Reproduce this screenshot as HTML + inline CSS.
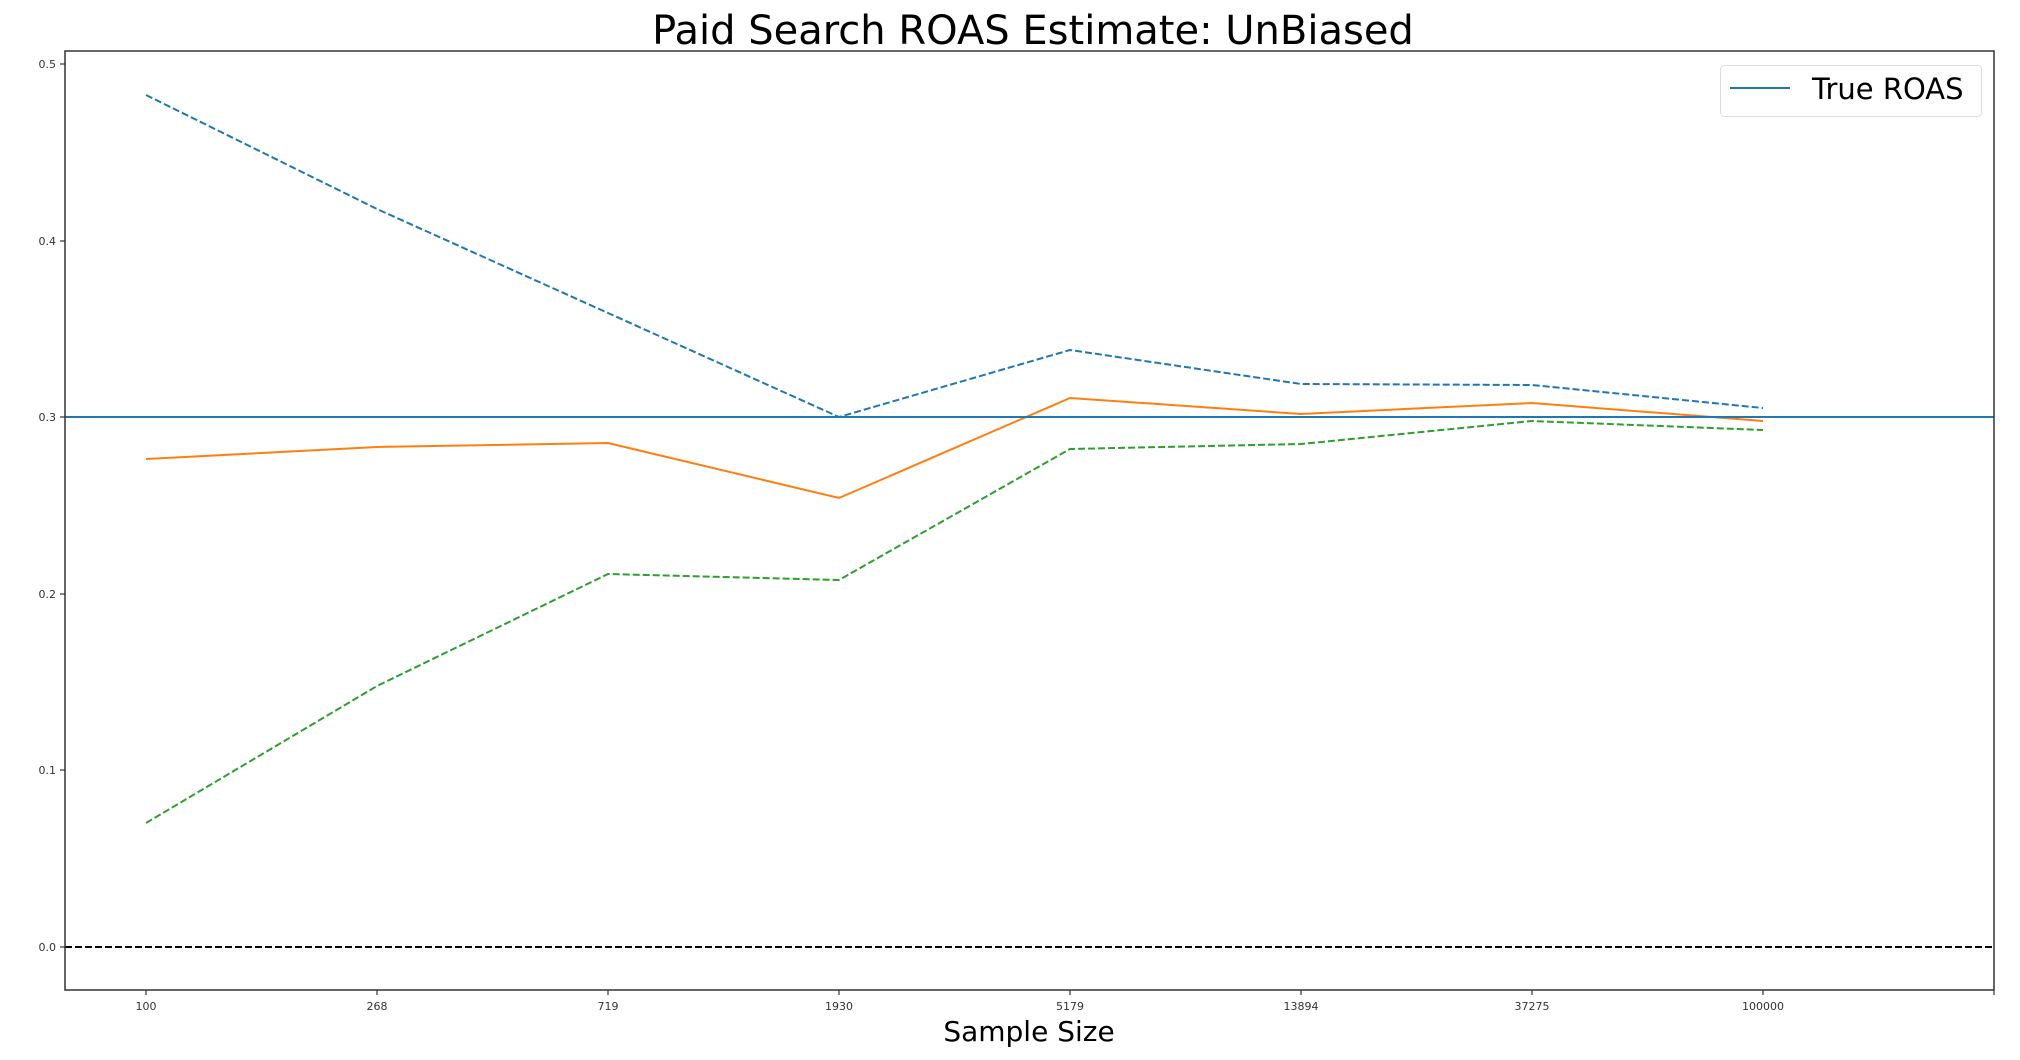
<!DOCTYPE html>
<html><head><meta charset="utf-8"><style>html,body{margin:0;padding:0;background:#fff;}svg{display:block}</style></head>
<body>
<svg width="2020" height="1060" viewBox="0 0 2020 1060" xmlns="http://www.w3.org/2000/svg" font-family="'DejaVu Sans','Liberation Sans',sans-serif">
<rect width="2020" height="1060" fill="#fff"/>
<text x="1033" y="44" font-size="40" text-anchor="middle" fill="#000">Paid Search ROAS Estimate: UnBiased</text>
<g stroke-width="2" fill="none">
<polyline points="146,95 377,209 608,313 839,417 1070,350 1301,384 1532,385 1763,408" stroke="#1f77b4" stroke-dasharray="7,3"/>
<polyline points="146,459 377,447 608,443 839,498 1070,398 1301,414 1532,403 1763,421" stroke="#ff7f0e"/>
<polyline points="146,823 377,686 608,574 839,580 1070,449 1301,444 1532,421 1763,430" stroke="#2ca02c" stroke-dasharray="7,3"/>
<line x1="65" y1="417" x2="1994" y2="417" stroke="#1f77b4"/>
<line x1="65" y1="947" x2="1994" y2="947" stroke="#000" stroke-dasharray="7,3"/>
</g>
<rect x="65" y="51" width="1929" height="939" fill="none" stroke="#333" stroke-width="1.5"/>
<g stroke="#333" stroke-width="1.2">
<line x1="60" y1="64" x2="65" y2="64"/><line x1="60" y1="241" x2="65" y2="241"/><line x1="60" y1="417" x2="65" y2="417"/><line x1="60" y1="594" x2="65" y2="594"/><line x1="60" y1="770" x2="65" y2="770"/><line x1="60" y1="947" x2="65" y2="947"/>
<line x1="146" y1="990" x2="146" y2="995"/><line x1="377" y1="990" x2="377" y2="995"/><line x1="608" y1="990" x2="608" y2="995"/><line x1="839" y1="990" x2="839" y2="995"/><line x1="1070" y1="990" x2="1070" y2="995"/><line x1="1301" y1="990" x2="1301" y2="995"/><line x1="1532" y1="990" x2="1532" y2="995"/><line x1="1763" y1="990" x2="1763" y2="995"/><line x1="1994" y1="990" x2="1994" y2="995"/>
</g>
<g font-size="11" fill="#333" text-anchor="end">
<text x="56" y="68">0.5</text><text x="56" y="245">0.4</text><text x="56" y="421">0.3</text><text x="56" y="598">0.2</text><text x="56" y="774">0.1</text><text x="56" y="951">0.0</text>
</g>
<g font-size="11" fill="#333" text-anchor="middle">
<text x="146" y="1010">100</text><text x="377" y="1010">268</text><text x="608" y="1010">719</text><text x="839" y="1010">1930</text><text x="1070" y="1010">5179</text><text x="1301" y="1010">13894</text><text x="1532" y="1010">37275</text><text x="1763" y="1010">100000</text>
</g>
<text x="1029" y="1041" font-size="28" text-anchor="middle" fill="#000">Sample Size</text>
<rect x="1720.5" y="65.5" width="261" height="51" rx="4" fill="#fff" stroke="#ddd" stroke-width="1"/>
<line x1="1730" y1="88" x2="1790" y2="88" stroke="#1f77b4" stroke-width="2"/>
<text x="1812" y="99" font-size="29" fill="#000">True ROAS</text>
</svg>
</body></html>
